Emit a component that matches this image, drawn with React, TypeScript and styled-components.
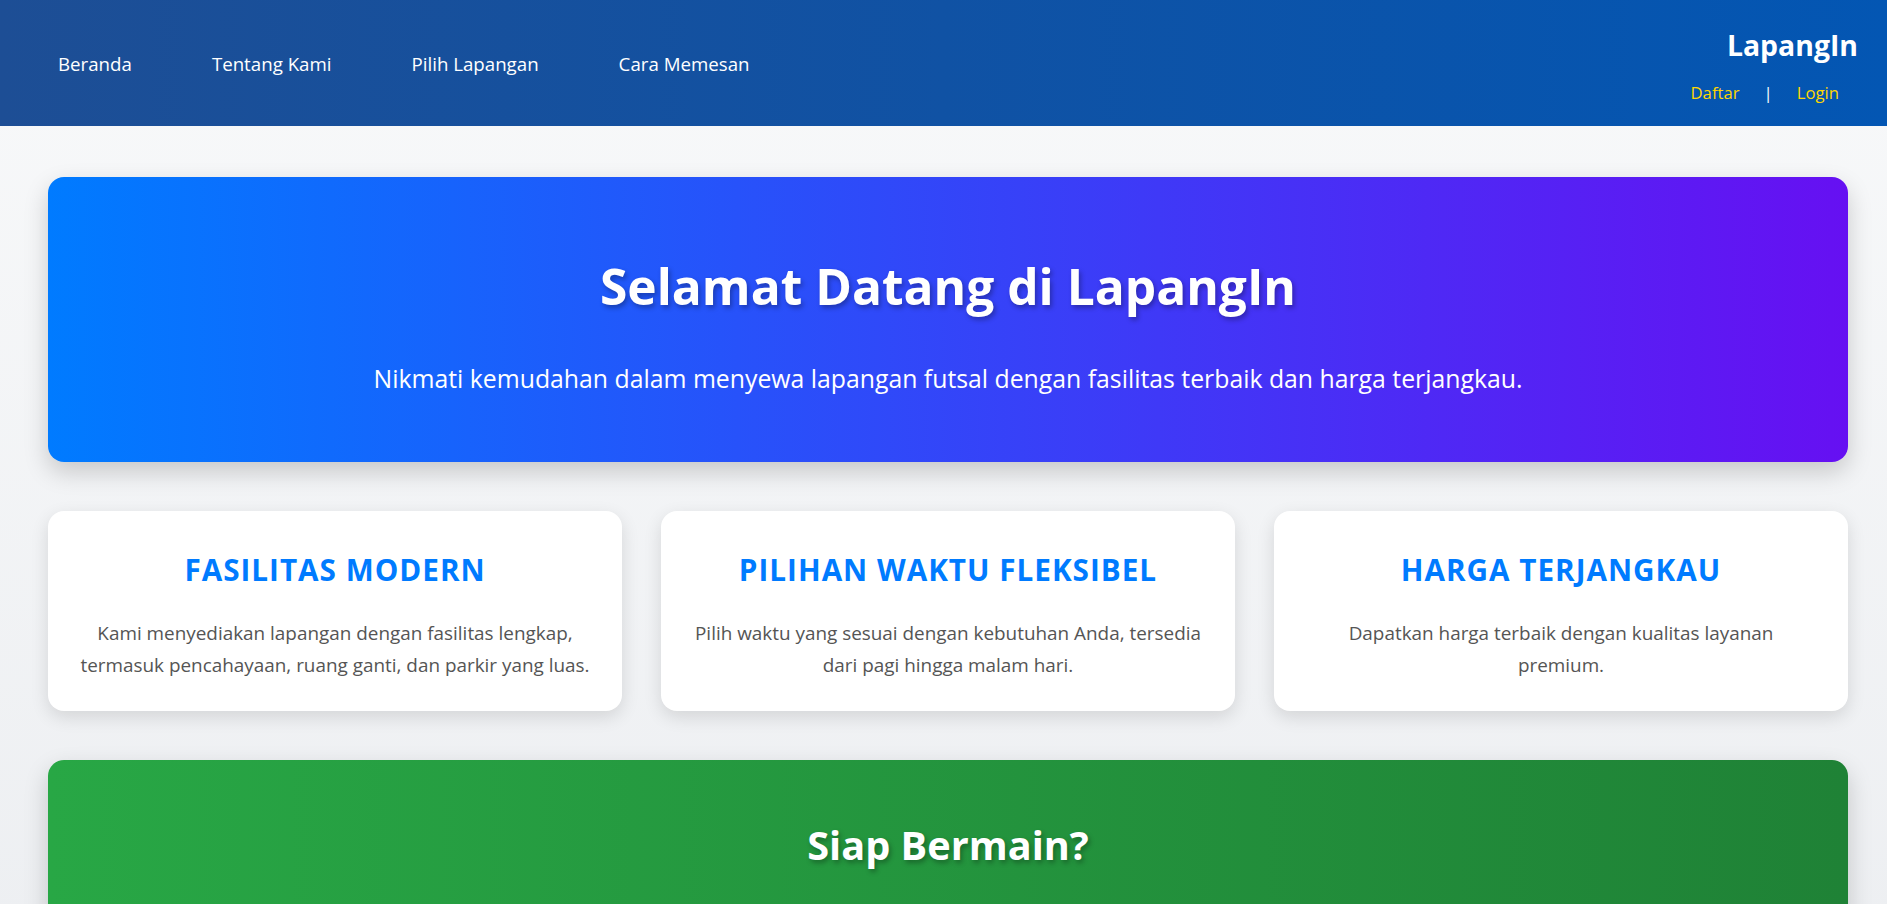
import React from "react";
import styled, { createGlobalStyle } from "styled-components";

const GlobalStyle = createGlobalStyle`
  * { box-sizing: border-box; }
  html, body { margin: 0; padding: 0; }
  body {
    font-family: "Open Sans", "Noto Sans", sans-serif;
    background: linear-gradient(180deg, #f8f9fa 0%, #eceef1 100%);
    min-height: 100vh;
    color: #333;
  }
`;

const Header = styled.header`
  display: flex;
  justify-content: space-between;
  align-items: stretch;
  height: 126px;
  background: linear-gradient(90deg, #1d4e95 0%, #0356b3 100%);
  color: #fff;
`;

const Nav = styled.nav`
  display: flex;
  align-items: center;
  gap: 80px;
  padding: 2px 0 0 58px;
`;

const NavLink = styled.a`
  color: #fff;
  text-decoration: none;
  font-size: 18.7px;
  line-height: 24px;
`;

const Brand = styled.div`
  display: flex;
  flex-direction: column;
  align-items: flex-end;
  padding: 28px 29px 0 0;
`;

const BrandName = styled.div`
  font-size: 28.4px;
  font-weight: 700;
  line-height: 34px;
  color: #fff;
`;

const AuthRow = styled.div`
  display: flex;
  align-items: center;
  gap: 24px;
  margin-top: 19px;
  padding-right: 19px;
  font-size: 16.7px;
  line-height: 24px;
`;

const AuthLink = styled.a`
  color: #ffd700;
  text-decoration: none;
`;

const Divider = styled.span`
  color: #fff;
`;

const Main = styled.main`
  display: flex;
  flex-direction: column;
  gap: 49px;
  padding: 51px 39px 0 48px;
`;

const Hero = styled.section`
  height: 285px;
  padding-top: 79px;
  border-radius: 16px;
  background: linear-gradient(90deg, #007bff 0%, #6610f2 100%);
  box-shadow: 0 10px 25px rgba(0, 0, 0, 0.18);
  text-align: center;
  color: #fff;
`;

const HeroTitle = styled.h1`
  margin: 0;
  font-size: 49.7px;
  line-height: 60px;
  font-weight: 700;
  text-shadow: 2px 3px 5px rgba(0, 0, 0, 0.3);
`;

const HeroText = styled.p`
  margin: 46px 0 0;
  font-size: 24.8px;
  line-height: 32px;
`;

const Features = styled.section`
  display: grid;
  grid-template-columns: repeat(3, 1fr);
  gap: 39px;
`;

const Card = styled.article`
  height: 200px;
  padding: 39px 10px 0;
  background: #fff;
  border-radius: 16px;
  box-shadow: 0 6px 18px rgba(0, 0, 0, 0.12);
  text-align: center;
`;

const CardTitle = styled.h3`
  margin: 0;
  font-size: 29.7px;
  line-height: 40px;
  font-weight: 700;
  color: #007bff;
  text-transform: uppercase;
  letter-spacing: 1px;
`;

const CardText = styled.p`
  margin: 27px 0 0;
  font-size: 18.9px;
  line-height: 32px;
  color: #555;
  white-space: nowrap;
`;

const Cta = styled.section`
  height: 260px;
  padding-top: 57px;
  border-radius: 16px 16px 0 0;
  background: linear-gradient(90deg, #28a745 0%, #1f8236 100%);
  box-shadow: 0 10px 25px rgba(0, 0, 0, 0.18);
  text-align: center;
  color: #fff;
`;

const CtaTitle = styled.h2`
  margin: 0;
  font-size: 39.7px;
  line-height: 56px;
  font-weight: 700;
  text-shadow: 2px 3px 5px rgba(0, 0, 0, 0.3);
`;

const features = [
  {
    title: "Fasilitas Modern",
    lines: [
      "Kami menyediakan lapangan dengan fasilitas lengkap,",
      "termasuk pencahayaan, ruang ganti, dan parkir yang luas.",
    ],
  },
  {
    title: "Pilihan Waktu Fleksibel",
    lines: [
      "Pilih waktu yang sesuai dengan kebutuhan Anda, tersedia",
      "dari pagi hingga malam hari.",
    ],
  },
  {
    title: "Harga Terjangkau",
    lines: ["Dapatkan harga terbaik dengan kualitas layanan", "premium."],
  },
];

export default function App() {
  return (
    <>
      <GlobalStyle />
      <Header>
        <Nav>
          <NavLink href="#">Beranda</NavLink>
          <NavLink href="#">Tentang Kami</NavLink>
          <NavLink href="#">Pilih Lapangan</NavLink>
          <NavLink href="#">Cara Memesan</NavLink>
        </Nav>
        <Brand>
          <BrandName>LapangIn</BrandName>
          <AuthRow>
            <AuthLink href="#">Daftar</AuthLink>
            <Divider>|</Divider>
            <AuthLink href="#">Login</AuthLink>
          </AuthRow>
        </Brand>
      </Header>
      <Main>
        <Hero>
          <HeroTitle>Selamat Datang di LapangIn</HeroTitle>
          <HeroText>
            Nikmati kemudahan dalam menyewa lapangan futsal dengan fasilitas
            terbaik dan harga terjangkau.
          </HeroText>
        </Hero>
        <Features>
          {features.map((f) => (
            <Card key={f.title}>
              <CardTitle>{f.title}</CardTitle>
              <CardText>
                {f.lines[0]}
                <br />
                {f.lines[1]}
              </CardText>
            </Card>
          ))}
        </Features>
        <Cta>
          <CtaTitle>Siap Bermain?</CtaTitle>
        </Cta>
      </Main>
    </>
  );
}
